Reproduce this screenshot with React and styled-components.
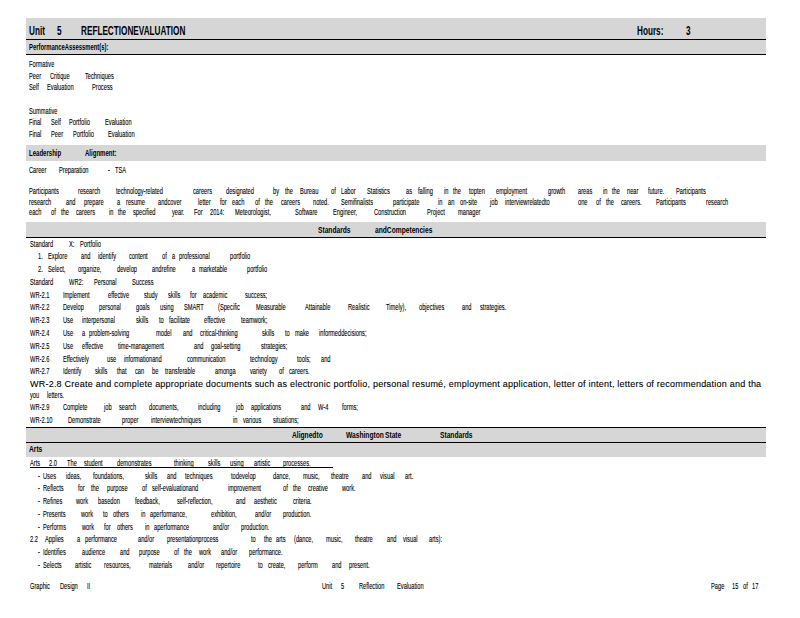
import React from "react"
import styled, { createGlobalStyle } from "styled-components"

const Global = createGlobalStyle`
  html, body { margin: 0; padding: 0; background: #fff; }
  body { font-family: "Liberation Sans", Arial, sans-serif; color: #111; }
`

const LEFT = 26

const Sheet = styled.div`
  width: 740px;
  padding: 18px 34px 0 ${LEFT}px;
`

const Band = styled.div`
  display: flex;
  box-sizing: border-box;
  height: ${(p) => p.$h}px;
  background: #d6d6d6;
  border-top: ${(p) => (p.$top ? "1px solid #000" : "none")};
  border-bottom: ${(p) => (p.$rule ? "1px solid #000" : "none")};
  padding-top: ${(p) => p.$pad || 0}px;
`

const Section = styled.div`
  padding-top: ${(p) => p.$pad}px;
`

const Row = styled.div`
  position: relative;
  display: flex;
  height: ${(p) => p.$h}px;
  line-height: 10px;
`

const Underlined = styled(Row)`
  &::after {
    content: "";
    position: absolute;
    left: 4px;
    top: 9px;
    width: 303px;
    height: 1px;
    background: #000;
  }
`

const Footer = styled.div`
  display: flex;
  height: 10px;
  line-height: 10px;
  padding-top: 11px;
`

const Word = styled.span`
  flex: none;
  display: block;
  white-space: pre;
  transform-origin: left center;
  font-size: ${(p) => (p.$title ? 13 : p.$bold ? 9 : 9.5)}px;
  font-weight: ${(p) => (p.$bold || p.$title ? 700 : 400)};
  color: #000;
  -webkit-text-stroke: ${(p) => (p.$bold || p.$title ? 0 : 0.12)}px #000;
  transform: scaleX(${(p) => p.$scale || (p.$title ? 0.63 : p.$bold ? 0.74 : 0.6)});
`

const WideLine = styled.span`
  flex: none;
  margin-left: 4px;
  white-space: pre;
  font-size: 9px;
  letter-spacing: 0.225px;
  color: #000;
  -webkit-text-stroke: 0.1px #000;
`

// "x:word" pairs, x is the page position of the word
const Words = ({ line, ...kind }) => {
  const items = line.split(" ").map((item) => {
    const cut = item.indexOf(":")
    return { x: Number(item.slice(0, cut)), text: item.slice(cut + 1) }
  })
  return (
    <>
      {items.map((item, i) => {
        const next = items[i + 1]
        const width = next ? next.x - item.x : undefined
        return (
          <Word
            key={i}
            {...kind}
            style={{ width, marginLeft: i === 0 ? item.x - LEFT : 0 }}
          >
            {item.text}
          </Word>
        )
      })}
    </>
  )
}

const Lines = ({ rows }) =>
  rows.map(([h, line], i) => (
    <Row $h={h} key={i}>
      <Words line={line} />
    </Row>
  ))

const assessment = [
  [12, "29:Formative"],
  [11, "29:Peer 50:Critique 85:Techniques"],
  [24, "29:Self 47:Evaluation 92:Process"],
  [11, "29:Summative"],
  [12, "29:Final 51:Self 69:Portfolio 105:Evaluation"],
  [16, "29:Final 51:Peer 73:Portfolio 108:Evaluation"],
]

const leadership = [
  [21, "29:Career 59:Preparation 108:- 115:TSA"],
  [11, "29:Participants 78:research 116:technology-related 193:careers 226:designated 273:by 285:the 300:Bureau 331:of 341:Labor 367:Statistics 406:as 418:falling 444:in 453:the 469:topten 496:employment 548:growth 578:areas 603:in 612:the 627:near 648:future. 676:Participants"],
  [10, "29:research 66:and 84:prepare 117:a 126:resume 158:andcover 198:letter 220:for 232:each 255:of 265:the 281:careers 313:noted. 341:Semifinalists 393:participate 438:in 448:an 460:on-site 490:job 505:interviewrelatedto 578:one 596:of 606:the 621:careers. 656:Participants 706:research"],
  [15, "29:each 51:of 61:the 76:careers 109:in 118:the 133:specified 172:year. 194:For 210:2014: 235:Meteorologist, 295:Software 333:Engineer, 374:Construction 427:Project 458:manager"],
]

const standardsTop = [
  [12, "30:Standard 69:X: 80:Portfolio"],
  [13, "38:1. 48:Explore 81:and 98:identify 129:content 162:of 172:a 179:professional 230:portfolio"],
  [13, "38:2. 48:Select, 78:organize, 117:develop 152:andrefine 192:a 199:marketable 247:portfolio"],
  [13, "30:Standard 69:WR2: 94:Personal 132:Success"],
  [12, "30:WR-2.1 63:Implement 108:effective 144:study 168:skills 190:for 203:academic 245:success;"],
  [13, "30:WR-2.2 63:Develop 99:personal 136:goals 160:using 184:SMART 218:(Specific 256:Measurable 305:Attainable 348:Realistic 386:Timely), 419:objectives 462:and 480:strategies."],
  [13, "30:WR-2.3 63:Use 82:interpersonal 136:skills 159:to 169:facilitate 204:effective 241:teamwork;"],
  [13, "30:WR-2.4 63:Use 82:a 89:problem-solving 156:model 183:and 200:critical-thinking 262:skills 285:to 295:make 319:informeddecisions;"],
  [13, "30:WR-2.5 63:Use 82:effective 118:time-management 194:and 211:goal-setting 261:strategies;"],
  [12, "30:WR-2.6 63:Effectively 107:use 124:informationand 187:communication 250:technology 297:tools; 321:and"],
  [13, "30:WR-2.7 63:Identify 95:skills 117:that 135:can 152:be 165:transferable 215:amonga 250:variety 279:of 289:careers."],
]

const standardsEnd = [
  [12, "30:you 47:letters."],
  [13, "30:WR-2.9 63:Complete 104:job 119:search 149:documents, 198:including 236:job 251:applications 301:and 318:W-4 342:forms;"],
  [12, "30:WR-2.10 68:Demonstrate 122:proper 151:interviewtechniques 233:in 243:various 273:situations;"],
]

const arts = [
  [12, "38:- 43:Uses 66:ideas, 93:foundations, 145:skills 167:and 185:techniques 231:todevelop 273:dance, 303:music, 331:theatre 362:and 380:visual 405:art."],
  [13, "38:- 43:Reflects 78:for 91:the 107:purpose 142:of 152:self-evaluationand 228:improvement 283:of 293:the 308:creative 342:work."],
  [13, "38:- 43:Refines 76:work 98:basedon 135:feedback, 177:self-reflection, 236:and 254:aesthetic 293:criteria."],
  [13, "38:- 43:Presents 81:work 103:to 113:others 141:in 150:aperformance, 211:exhibition, 255:and/or 283:production."],
  [12, "38:- 43:Performs 82:work 104:for 117:others 145:in 154:aperformance 213:and/or 241:production."],
  [13, "30:2.2 45:Applies 77:a 85:performance 138:and/or 167:presentationprocess 251:to 264:the 276:arts 294:(dance, 326:music, 355:theatre 387:and 403:visual 429:arts):"],
  [13, "38:- 43:Identifies 82:audience 120:and 139:purpose 174:of 184:the 199:work 221:and/or 249:performance."],
  [10, "38:- 43:Selects 75:artistic 104:resources, 149:materials 188:and/or 216:repertoire 258:to 268:create, 298:perform 332:and 349:present."],
]

export default function App() {
  return (
    <Sheet>
      <Global />
      <Band $h={22} $rule $pad={5}>
        <Words $title line="29:Unit 57:5 81:REFLECTIONEVALUATION 637:Hours: 686:3" />
      </Band>
      <Band $h={15} $rule $pad={2}>
        <Words $bold $scale={0.65} line="29:PerformanceAssessment(s):" />
      </Band>

      <Section $pad={4}>
        <Lines rows={assessment} />
      </Section>

      <Band $h={16} $pad={3}>
        <Words $bold $scale={0.67} line="29:Leadership 85:Alignment:" />
      </Band>

      <Section $pad={4}>
        <Lines rows={leadership} />
      </Section>

      <Band $h={16} $rule $pad={3}>
        <Words $bold line="318:Standards 375:andCompetencies" />
      </Band>

      <Section $pad={1}>
        <Lines rows={standardsTop} />
        <Row $h={11}>
          <WideLine>
            WR-2.8 Create and complete appropriate documents such as electronic portfolio, personal resumé, employment application, letter of intent, letters of recommendation and tha
          </WideLine>
        </Row>
        <Lines rows={standardsEnd} />
      </Section>

      <Band $h={16} $top $rule $pad={2}>
        <Words $bold line="292:Alignedto 346:Washington 385:State 440:Standards" />
      </Band>
      <Band $h={14} $pad={1}>
        <Words $bold line="29:Arts" />
      </Band>

      <Section $pad={1}>
        <Underlined $h={13}>
          <Words line="30:Arts 49:2.0 67:The 84:student 117:demonstrates 174:thinking 208:skills 230:using 254:artistic 283:processes." />
        </Underlined>
        <Lines rows={arts} />
      </Section>

      <Footer>
        <Words line="30:Graphic 60:Design 87:II 322:Unit 341:5 359:Reflection 397:Evaluation 711:Page 732:15 743:of 752:17" />
      </Footer>
    </Sheet>
  )
}
